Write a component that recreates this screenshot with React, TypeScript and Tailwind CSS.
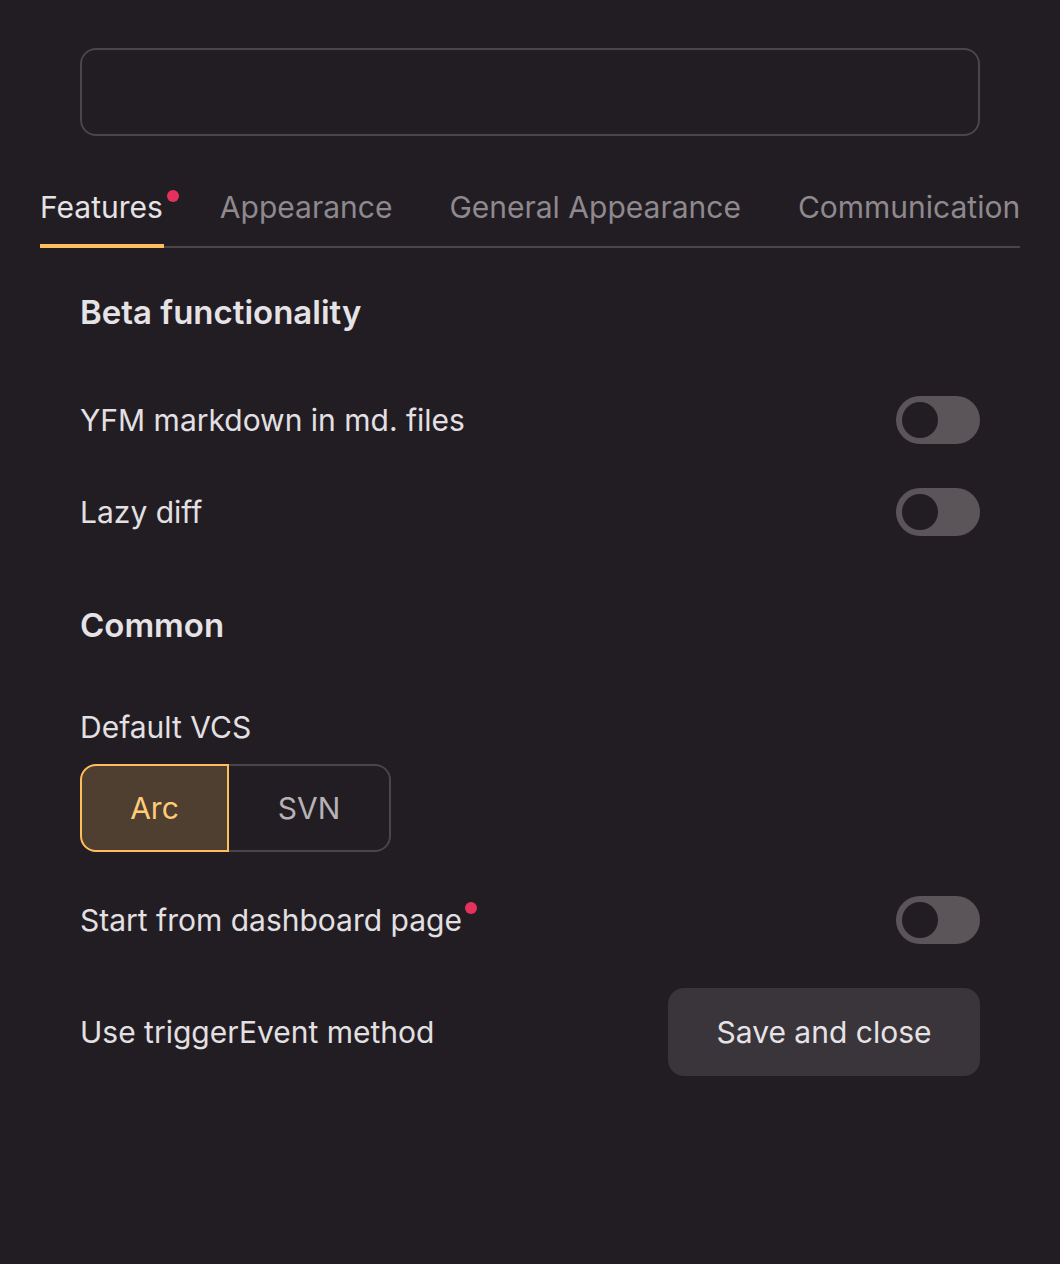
import { useState } from 'react';

const TABS = ['Features', 'Appearance', 'General Appearance', 'Communication'];

function Dot({ className = '' }: { className?: string }) {
  return <span className={`absolute w-[12px] h-[12px] rounded-full bg-[#e5325d] ${className}`} />;
}

function Toggle({ on, onChange }: { on: boolean; onChange: (v: boolean) => void }) {
  return (
    <button
      onClick={() => onChange(!on)}
      className={`relative w-[84px] h-[48px] rounded-full shrink-0 ${on ? 'bg-[#ffbe5c]' : 'bg-[#5b555a]'}`}
    >
      <span
        className={`absolute top-[6px] w-[36px] h-[36px] rounded-full bg-[#221d22] ${on ? 'left-[42px]' : 'left-[6px]'}`}
      />
    </button>
  );
}

function Row({ label, dot, children }: { label: string; dot?: boolean; children: React.ReactNode }) {
  return (
    <div className="flex items-center justify-between">
      <span className="relative text-[30px] leading-[36px] text-[#e3e0e3]">
        {label}
        {dot && <Dot className="-right-[15px] top-0" />}
      </span>
      {children}
    </div>
  );
}

export default function App() {
  const [tab, setTab] = useState(0);
  const [yfm, setYfm] = useState(false);
  const [lazy, setLazy] = useState(false);
  const [dash, setDash] = useState(false);
  const [vcs, setVcs] = useState<'Arc' | 'SVN'>('Arc');

  return (
    <div className="min-h-[1264px] bg-[#221d22] px-10 pt-[48px] font-['Inter',sans-serif]">
      <div className="mx-10 h-[88px] rounded-[16px] border-2 border-[#4a454a]" />

      {/* Tabs */}
      <div className="mt-[24px] flex gap-[57px] border-b-2 border-[#4a454a]">
        {TABS.map((t, i) => (
          <button
            key={t}
            onClick={() => setTab(i)}
            className={`relative h-[86px] pt-[8px] whitespace-nowrap text-[30px] leading-[36px] ${
              i === tab ? 'text-[#e6e3e6]' : 'text-[#8e898e]'
            }`}
          >
            {t}
            {i === 0 && <Dot className="-right-[16px] top-[30px]" />}
            {i === tab && <span className="absolute left-0 -right-[1px] -bottom-[2px] h-[4px] bg-[#ffbe5c]" />}
          </button>
        ))}
      </div>

      <div className="px-10">
        <h2 className="mt-[40px] text-[33px] leading-[48px] font-semibold text-[#e6e3e6]">Beta functionality</h2>
        <div className="mt-[60px] flex flex-col gap-[44px]">
          <Row label="YFM markdown in md. files">
            <Toggle on={yfm} onChange={setYfm} />
          </Row>
          <Row label="Lazy diff">
            <Toggle on={lazy} onChange={setLazy} />
          </Row>
        </div>

        <h2 className="mt-[65px] text-[33px] leading-[48px] font-semibold text-[#e6e3e6]">Common</h2>
        <div className="mt-[60px] text-[30px] leading-[36px] text-[#e3e0e3]">Default VCS</div>
        <div className="mt-[19px] flex h-[88px] w-[311px]">
          <button
            onClick={() => setVcs('Arc')}
            className={`w-[149px] rounded-l-[16px] border-2 text-[30px] ${
              vcs === 'Arc'
                ? 'border-[#ffbe5c] bg-[#4e3f30] text-[#ffcb7a]'
                : 'border-[#4a454a] border-r-0 text-[#b6b2b6]'
            }`}
          >
            Arc
          </button>
          <button
            onClick={() => setVcs('SVN')}
            className={`flex-1 rounded-r-[16px] border-2 text-[30px] ${
              vcs === 'SVN'
                ? 'border-[#ffbe5c] bg-[#4e3f30] text-[#ffcb7a]'
                : 'border-[#4a454a] border-l-0 text-[#b6b2b6]'
            }`}
          >
            SVN
          </button>
        </div>

        <div className="mt-[44px] flex flex-col gap-[44px]">
          <Row label="Start from dashboard page" dot>
            <Toggle on={dash} onChange={setDash} />
          </Row>
          <Row label="Use triggerEvent method">
            <button className="h-[88px] w-[312px] rounded-[16px] bg-[#3a353a] text-[30px] text-[#e6e3e6]">
              Save and close
            </button>
          </Row>
        </div>
      </div>
    </div>
  );
}
